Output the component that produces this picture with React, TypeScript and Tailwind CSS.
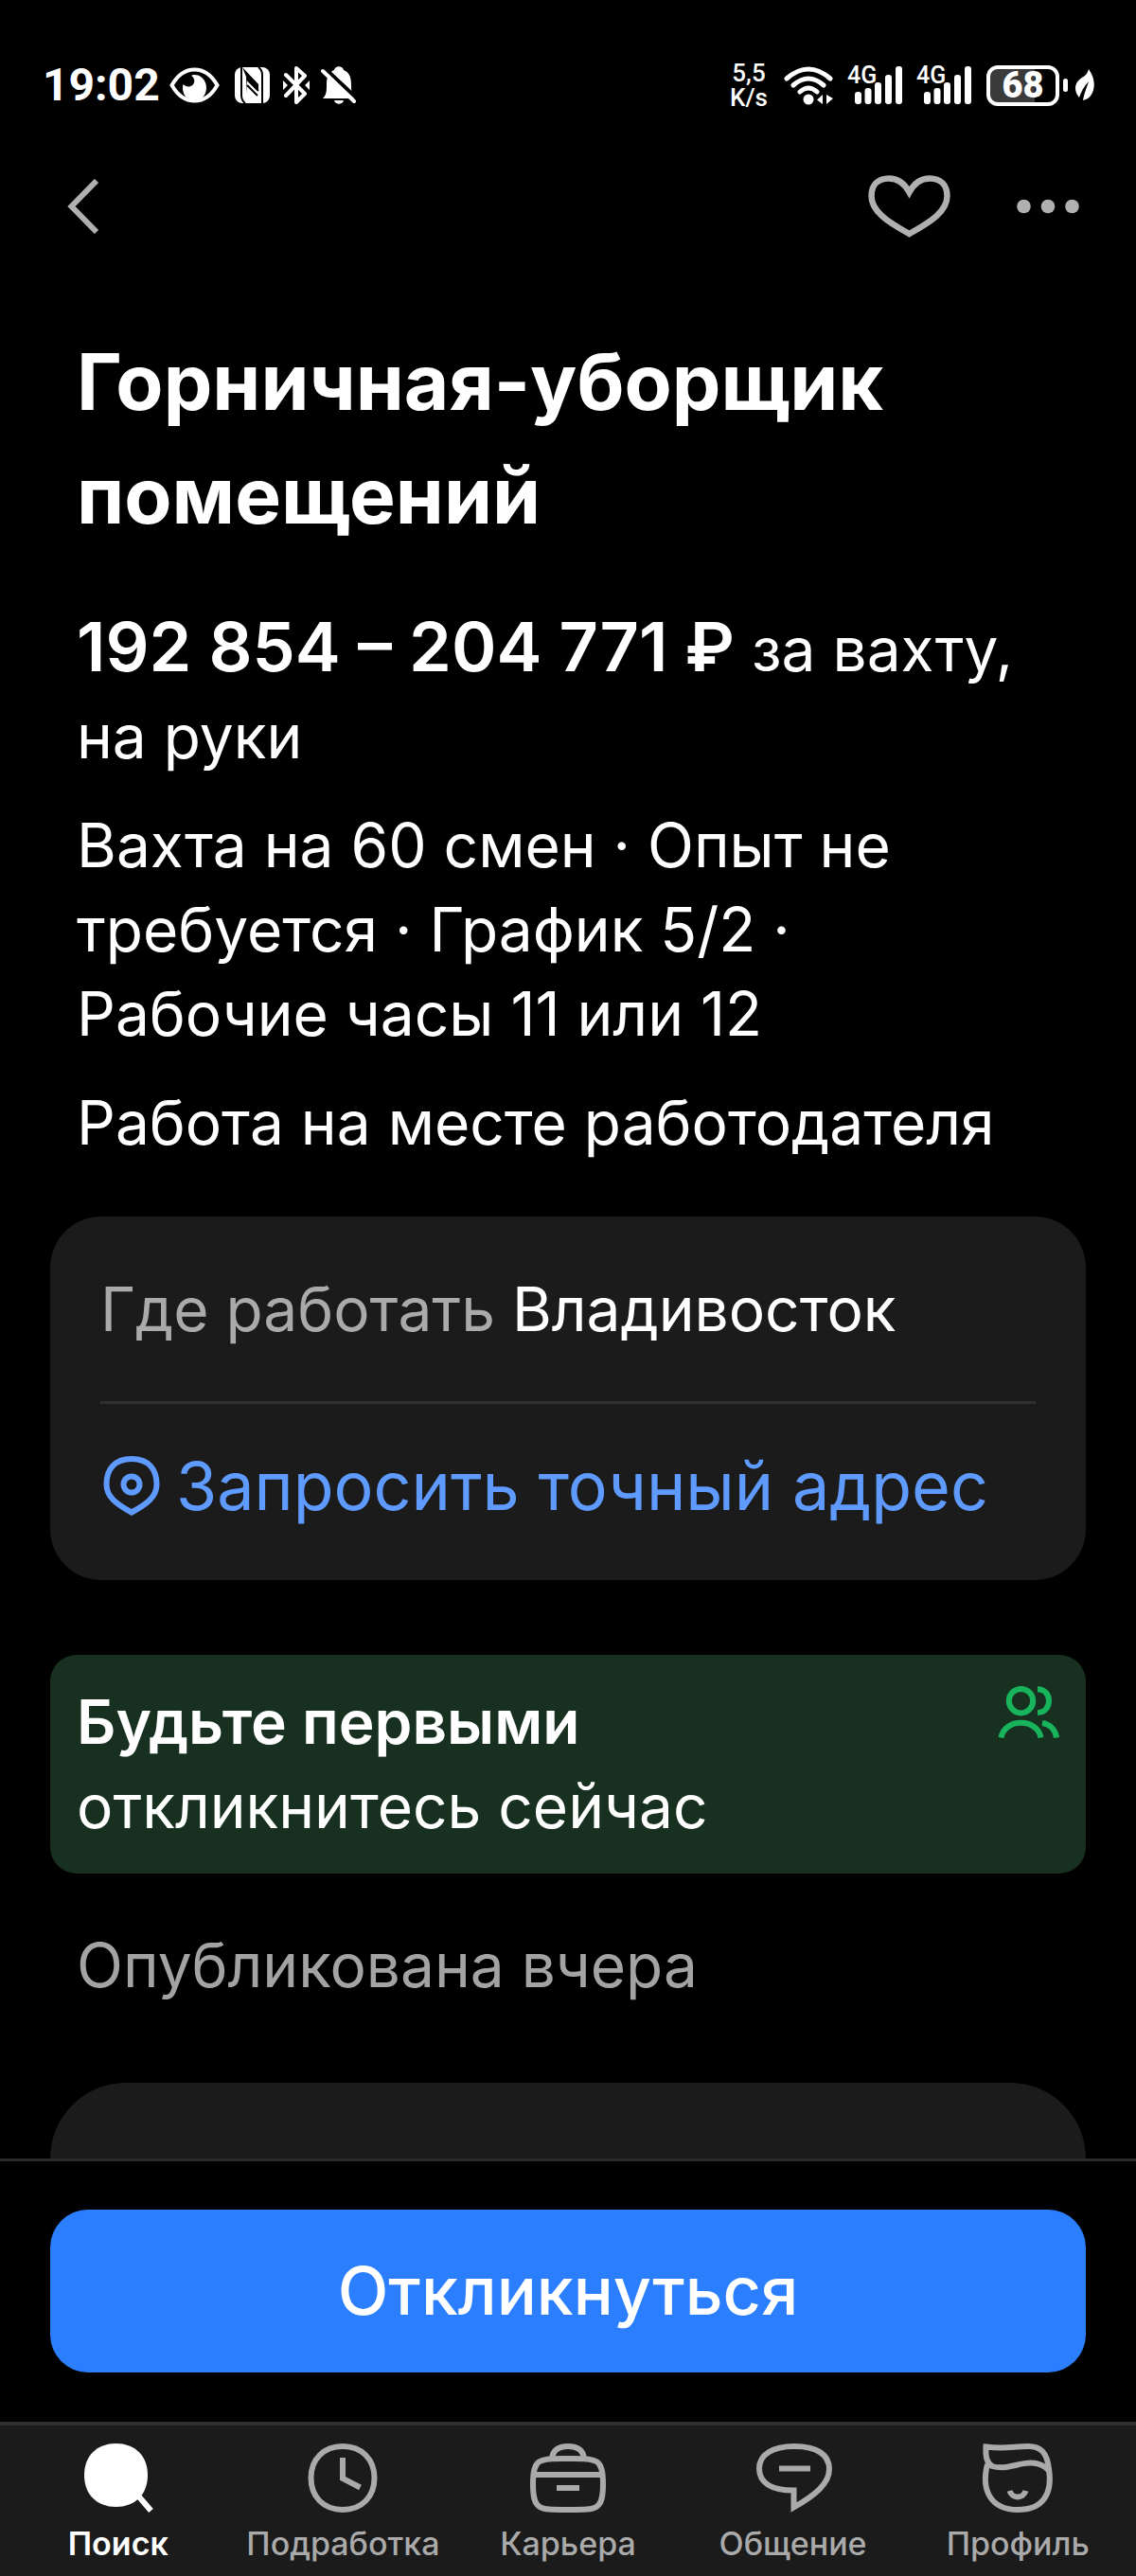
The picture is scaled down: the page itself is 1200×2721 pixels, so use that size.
import { useState } from "react";
import type { ReactNode } from "react";

interface NavItem {
  id: string;
  label: string;
  icon: ReactNode;
}

const NavIcon = ({ children }: { children: ReactNode }) => (
  <svg
    viewBox="0 0 84 74"
    className="h-[74px] w-[84px]"
    fill="none"
    stroke="currentColor"
    strokeWidth={6}
    aria-hidden="true"
  >
    {children}
  </svg>
);

const navItems: NavItem[] = [
  {
    id: "search",
    label: "Поиск",
    icon: (
      <NavIcon>
        <path
          d="M39.500 0C60 0 73 13.500 73 33.500S60 67 39.500 67 6 53.500 6 33.500 19 0 39.500 0Z"
          fill="currentColor"
          stroke="none"
        />
        <path d="M61 53L76.500 71" />
      </NavIcon>
    ),
  },
  {
    id: "shifts",
    label: "Подработка",
    icon: (
      <NavIcon>
        <path d="M42 3C62 3 75.500 16.500 75.500 36.500S62 70 42 70 8.500 56.500 8.500 36.500 22 3 42 3Z" />
        <path d="M42 15V37L60.500 46.500" />
      </NavIcon>
    ),
  },
  {
    id: "career",
    label: "Карьера",
    icon: (
      <NavIcon>
        <path d="M25 16C26 7 32 3 42 3S58 7 59 16" />
        <path d="M42 16C72 16 79 15 79 43S72 70 42 70 5 71 5 43 12 16 42 16Z" />
        <path d="M5 33H79M30 47H54" />
      </NavIcon>
    ),
  },
  {
    id: "chat",
    label: "Общение",
    icon: (
      <NavIcon>
        <path d="M43 3C67 3 80 12 80 27 80 42 66 54 42.500 67.500V49.500C18 49.500 6 41 6 26.500 6 12 20 3 43 3Z" />
        <path d="M27 26.500H60" />
      </NavIcon>
    ),
  },
  {
    id: "profile",
    label: "Профиль",
    icon: (
      <NavIcon>
        <path d="M10 22C3 50 14 70 42 70 69 70 79 53 75 27 73 9 66 3 53 3 38 3 29 6 8.500 3.500 8 14 9 20 15 24 34 30 52 13 71 25L76 30" />
        <path d="M33.500 50C36 58.500 48 58.500 50.500 50" />
      </NavIcon>
    ),
  },
];

const SignalBars = () => (
  <div className="relative h-10 w-[58px]">
    <span className="absolute top-0 left-0 font-[Roboto] text-[25px] leading-5 font-medium">
      4G
    </span>
    <svg viewBox="0 0 58 40" className="h-10 w-[58px]" fill="currentColor" aria-hidden="true">
      <rect x="8" y="27" width="7" height="13" rx="3" />
      <rect x="18.500" y="23" width="7" height="17" rx="3" />
      <rect x="29" y="17" width="7" height="23" rx="3" />
      <rect x="40" y="9" width="7" height="31" rx="3" />
      <rect x="51" y="0" width="7" height="40" rx="3" />
    </svg>
  </div>
);

const StatusBar = () => (
  <div className="flex h-[180px] items-center justify-between pr-11 pl-[45px] text-white">
    <div className="flex items-center">
      <span className="font-[Roboto] text-[48px] leading-none font-bold">19:02</span>
      <svg viewBox="0 0 53 38" className="ml-[10px] h-[38px] w-[53px]" aria-hidden="true">
        <path
          d="M2.500 19C15-3 38-3 50.500 19 38 41 15 41 2.500 19Z"
          fill="none"
          stroke="currentColor"
          strokeWidth={4}
        />
        <path
          d="M25 8A12.500 14 0 1 1 14.500 18C18 22 25 21 26 16 27 13 25 10 23 9Z"
          fill="currentColor"
        />
      </svg>
      <svg viewBox="0 0 37 38" className="ml-4 h-[38px] w-[37px]" aria-hidden="true">
        <rect width="37" height="38" rx="8" fill="currentColor" />
        <path d="M7 0V30Q7 35 11 38" fill="none" stroke="black" strokeWidth={2} />
        <path d="M29 38V8Q29 3 25 0" fill="none" stroke="black" strokeWidth={2} />
        <path d="M8 0L25 18V25L13 13V28L12 10Z" fill="black" />
        <path d="M13 13L25 25M13 19L24 30" stroke="black" strokeWidth={2} />
      </svg>
      <svg
        viewBox="0 0 28 40"
        className="ml-[14px] h-10 w-7"
        fill="none"
        stroke="currentColor"
        strokeWidth={4}
        strokeLinecap="round"
        strokeLinejoin="round"
        aria-hidden="true"
      >
        <path d="M3 9L23 29 14 38V2L23 10 3 31" />
        <path d="M0 15L5 20 0 25ZM28 15L23 20 28 25Z" fill="currentColor" stroke="none" />
      </svg>
      <svg viewBox="0 0 37 40" className="ml-3 h-10 w-[37px]" aria-hidden="true">
        <path
          d="M2 34C6 30 6 26 6 19 6 10 9 6 14 4 15-1 23-1 24 4 31 7 32 13 32 20 32 27 33 31 36 34ZM14 36H24C23 41 15 41 14 36Z"
          fill="currentColor"
        />
        <path d="M4 2L37 33" stroke="black" strokeWidth={4} />
        <path d="M2 5L35 37" stroke="currentColor" strokeWidth={4} strokeLinecap="round" />
      </svg>
    </div>

    <div className="flex items-center">
      <div className="flex flex-col gap-[6px] text-center font-[Roboto] text-[26px] leading-5 font-medium">
        <span>5,5</span>
        <span>K/s</span>
      </div>
      <svg
        viewBox="0 0 52 41"
        className="ml-[17px] h-[41px] w-[52px]"
        fill="none"
        stroke="currentColor"
        strokeWidth={5}
        strokeLinecap="round"
        aria-hidden="true"
      >
        <path d="M3 13Q26-7 49 13M10 20Q26 6 42 20M17 27Q26 19 35 27" />
        <circle cx="26" cy="35" r="5.500" fill="currentColor" stroke="none" />
        <path d="M41 30V40L35 35.500ZM45 30V40L52 34Z" fill="currentColor" stroke="none" />
      </svg>
      <div className="ml-[15px] flex gap-[15px]">
        <SignalBars />
        <SignalBars />
      </div>
      <div className="ml-4 flex h-[43px] w-[77px] items-center justify-center rounded-[12px] border-4 border-white bg-linear-to-r from-[#3a3a3a] from-68% to-black to-68% font-[Roboto] text-[38px] leading-none font-black">
        68
      </div>
      <div className="ml-1 h-[14px] w-[5px] rounded-sm bg-white" />
      <svg viewBox="0 0 20 34" className="ml-2 h-[34px] w-5" aria-hidden="true">
        <path
          d="M14 0C19 7 21 15 19 22 17 29 13 32 8 33 9 26 12 19 14 13 9 18 6 24 4 30-3 22 0 13 7 9 11 7 13 4 14 0Z"
          fill="currentColor"
        />
      </svg>
    </div>
  </div>
);

const TopBar = ({ liked, onLike }: { liked: boolean; onLike: () => void }) => (
  <header className="flex h-[76px] items-center justify-between pr-[60px] pl-[71px] text-[#b0b0b0]">
    <button type="button" aria-label="Назад">
      <svg viewBox="0 0 34 58" className="h-[58px] w-[34px]" fill="none" stroke="currentColor" strokeWidth={6}>
        <path d="M31 2L4.500 29 31 56" />
      </svg>
    </button>
    <div className="flex items-center gap-[70px]">
      <button type="button" aria-label="В избранное" aria-pressed={liked} onClick={onLike}>
        <svg
          viewBox="0 0 87 66"
          className="h-[66px] w-[87px]"
          fill={liked ? "currentColor" : "none"}
          stroke="currentColor"
          strokeWidth={6.5}
        >
          <path d="M43.500 18C38 8 31 3.500 22 3.500 10 3.500 3.500 11 3.500 22 3.500 38 20 49 43.500 62 67 49 83.500 38 83.500 22 83.500 11 77 3.500 65 3.500 56 3.500 49 8 43.500 18Z" />
        </svg>
      </button>
      <button type="button" aria-label="Ещё">
        <svg viewBox="0 0 66 16" className="h-4 w-[66px]" fill="currentColor">
          <circle cx="7.500" cy="8" r="7.300" />
          <circle cx="33" cy="8" r="7.300" />
          <circle cx="58.500" cy="8" r="7.300" />
        </svg>
      </button>
    </div>
  </header>
);

export default function App() {
  const [active, setActive] = useState("search");
  const [liked, setLiked] = useState(false);

  return (
    <div className="flex h-screen flex-col overflow-hidden bg-black font-[Inter,sans-serif] text-white">
      <StatusBar />
      <TopBar liked={liked} onLike={() => setLiked(!liked)} />

      <main className="min-h-0 flex-1 overflow-hidden px-[53px] pt-[88px]">
        <div className="px-7">
          <h1 className="text-[82px] leading-[120px] font-bold">
            Горничная-уборщик помещений
          </h1>
          <p className="mt-[53px] text-[64px] leading-[92px]">
            <strong className="text-[72px] font-semibold">192 854 – 204 771 ₽</strong>{" "}
            <span>за вахту,</span> <span>на руки</span>
          </p>
          <p className="mt-6 text-[64px] leading-[89px]">
            Вахта на 60 смен · Опыт не требуется · График 5/2 ·
            Рабочие&nbsp;часы 11 или 12
          </p>
          <p className="mt-[26px] text-[64px] leading-[89px]">Работа на месте работодателя</p>
        </div>

        <section className="mt-[55px] rounded-[54px] bg-[#1b1b1b] px-[53px]">
          <p className="border-b-[3px] border-[#303030] py-[53px] text-[64px] leading-[89px]">
            <span className="text-[#aaaaaa]">Где работать</span> Владивосток
          </p>
          <a
            href="#address"
            className="flex items-center gap-[14px] pt-[39px] pb-[51px] text-[70px] leading-[96px] text-[#5f9bff]"
          >
            <svg
              viewBox="0 0 66 66"
              className="size-[66px]"
              fill="none"
              stroke="currentColor"
              strokeWidth={6}
              aria-hidden="true"
            >
              <path d="M33 4C51 4 59.500 15 59.500 31 59.500 44 49 52 33 60.500 17 52 6.500 44 6.500 31 6.500 15 15 4 33 4Z" />
              <circle cx="33" cy="31" r="8.500" />
            </svg>
            Запросить точный адрес
          </a>
        </section>

        <section className="mt-[79px] flex items-start justify-between rounded-[28px] bg-[#18301f] px-7 pt-[26px] pb-[27px] text-[64px] leading-[89px]">
          <div>
            <h2 className="font-semibold">Будьте первыми</h2>
            <p>откликнитесь сейчас</p>
          </div>
          <svg
            viewBox="0 0 66 56"
            className="mt-[7px] h-14 w-[66px] text-[#18b45c]"
            fill="none"
            stroke="currentColor"
            strokeWidth={6}
            aria-hidden="true"
          >
            <circle cx="25.500" cy="15.700" r="12.700" />
            <path d="M43 3.200C59 3.200 59 28 43 28" />
            <path d="M4.500 54.500C8 33.500 43 33.500 46.500 54.500M48 39C57 40.500 62 47 63 54.500" />
          </svg>
        </section>

        <p className="mt-[52px] px-7 text-[64px] leading-[89px] text-[#a3a3a3]">
          Опубликована вчера
        </p>
        <div className="mt-20 h-40 rounded-[80px] bg-[#1b1b1b]" />
      </main>

      <div className="border-t-[3px] border-[#2b2b2b] px-[53px] pt-[51px] pb-[52px]">
        <button
          type="button"
          className="h-[172px] w-full rounded-[40px] bg-[#2b7fff] text-[70px] leading-[96px] font-medium"
        >
          Откликнуться
        </button>
      </div>

      <nav className="grid grid-cols-5 border-t-4 border-[#303030] bg-[#1b1b1b] px-[6px] pt-[19px] pb-3">
        {navItems.map((item) => (
          <button
            key={item.id}
            type="button"
            onClick={() => setActive(item.id)}
            className={
              active === item.id
                ? "flex flex-col items-center gap-[10px] font-semibold text-white"
                : "flex flex-col items-center gap-[10px] font-medium text-[#aaaaaa]"
            }
          >
            {item.icon}
            <span className="text-[34px] leading-[44px]">{item.label}</span>
          </button>
        ))}
      </nav>
    </div>
  );
}
